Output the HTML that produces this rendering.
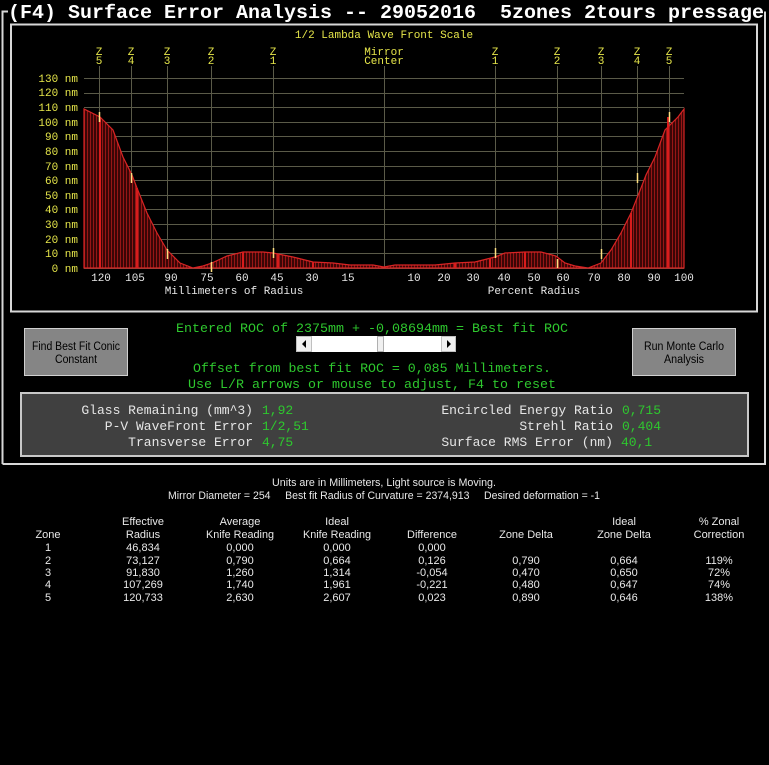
<!DOCTYPE html>
<html><head><meta charset="utf-8"><style>
html,body{margin:0;padding:0;background:#000;width:769px;height:765px;overflow:hidden}
svg{display:block}
.m{font-family:"Liberation Mono",monospace}
.s{font-family:"Liberation Sans",sans-serif}
</style></head><body>
<svg width="769" height="765" viewBox="0 0 769 765" xmlns="http://www.w3.org/2000/svg">
<defs>
<pattern id="hp" width="3" height="10" patternUnits="userSpaceOnUse" x="84">
<rect width="3" height="10" fill="#3a0606"/>
<rect width="1" height="10" fill="#961616"/>
</pattern>
</defs>
<rect width="769" height="765" fill="#000"/>
<path d="M2.5 464 V11.5 H8 M765 11.5 V464 H2.5" fill="none" stroke="#d8d8d8" stroke-width="2"/>
<text x="8" y="18" class="m" font-size="19" font-weight="bold" fill="#ffffff" textLength="756" lengthAdjust="spacingAndGlyphs" style="white-space:pre">(F4) Surface Error Analysis -- 29052016  5zones 2tours pressage</text>
<rect x="11" y="24.5" width="746" height="287" fill="#000" stroke="#d8d8d8" stroke-width="2"/>
<text x="384" y="38" class="m" font-size="11" fill="#e6e64a" text-anchor="middle">1/2 Lambda Wave Front Scale</text>
<g stroke="#5a5a48" stroke-width="1">
<line x1="84" x2="684" y1="78.5" y2="78.5"/><line x1="84" x2="684" y1="93.5" y2="93.5"/>
<line x1="84" x2="684" y1="107.5" y2="107.5"/><line x1="84" x2="684" y1="122.5" y2="122.5"/>
<line x1="84" x2="684" y1="136.5" y2="136.5"/><line x1="84" x2="684" y1="151.5" y2="151.5"/>
<line x1="84" x2="684" y1="166.5" y2="166.5"/><line x1="84" x2="684" y1="180.5" y2="180.5"/>
<line x1="84" x2="684" y1="195.5" y2="195.5"/><line x1="84" x2="684" y1="209.5" y2="209.5"/>
<line x1="84" x2="684" y1="224.5" y2="224.5"/><line x1="84" x2="684" y1="239.5" y2="239.5"/>
<line x1="84" x2="684" y1="253.5" y2="253.5"/><line x1="84" x2="684" y1="268.5" y2="268.5"/>
<line x1="99.5" x2="99.5" y1="66" y2="268"/><line x1="131.5" x2="131.5" y1="66" y2="268"/>
<line x1="167.5" x2="167.5" y1="66" y2="268"/><line x1="211.5" x2="211.5" y1="66" y2="268"/>
<line x1="273.5" x2="273.5" y1="66" y2="268"/><line x1="384.5" x2="384.5" y1="66" y2="268"/>
<line x1="495.5" x2="495.5" y1="66" y2="268"/><line x1="557.5" x2="557.5" y1="66" y2="268"/>
<line x1="601.5" x2="601.5" y1="66" y2="268"/><line x1="637.5" x2="637.5" y1="66" y2="268"/>
<line x1="669.5" x2="669.5" y1="66" y2="268"/>
</g>
<g class="m" font-size="11" fill="#e6e64a" text-anchor="middle">
<text x="99" y="55">Z</text><text x="99" y="64">5</text>
<text x="131" y="55">Z</text><text x="131" y="64">4</text>
<text x="167" y="55">Z</text><text x="167" y="64">3</text>
<text x="211" y="55">Z</text><text x="211" y="64">2</text>
<text x="273" y="55">Z</text><text x="273" y="64">1</text>
<text x="384" y="55">Mirror</text><text x="384" y="64">Center</text>
<text x="495" y="55">Z</text><text x="495" y="64">1</text>
<text x="557" y="55">Z</text><text x="557" y="64">2</text>
<text x="601" y="55">Z</text><text x="601" y="64">3</text>
<text x="637" y="55">Z</text><text x="637" y="64">4</text>
<text x="669" y="55">Z</text><text x="669" y="64">5</text>
</g>
<g class="m" font-size="11" fill="#e6e64a" text-anchor="end">
<text x="78" y="82">130 nm</text><text x="78" y="96">120 nm</text><text x="78" y="111">110 nm</text>
<text x="78" y="126">100 nm</text><text x="78" y="140">90 nm</text><text x="78" y="155">80 nm</text>
<text x="78" y="170">70 nm</text><text x="78" y="184">60 nm</text><text x="78" y="199">50 nm</text>
<text x="78" y="213">40 nm</text><text x="78" y="228">30 nm</text><text x="78" y="243">20 nm</text>
<text x="78" y="257">10 nm</text><text x="78" y="272">0 nm</text>
</g>
<path d="M84 268 L84 109 L100 117 L113 130 L123 157 L132 175 L137 188 L147 213 L157 233 L167 250 L180 263 L193 268 L203 266 L212 263 L227 256 L243 252 L263 252 L273 253 L293 257 L313 262 L333 263 L350 265 L373 265 L384 267 L395 265 L418 265 L435 265 L455 263 L475 262 L495 257 L505 253 L525 252 L541 252 L556 256 L565 263 L575 266 L588 268 L601 263 L611 250 L621 233 L631 213 L641 188 L646 175 L655 157 L665 130 L678 117 L684 109 L684 268 Z" fill="url(#hp)" stroke="#d82424" stroke-width="1.2"/>
<g stroke="#d81c1c" stroke-width="2">
<line x1="100" x2="100" y1="117" y2="268"/><line x1="137" x2="137" y1="188" y2="268"/>
<line x1="243" x2="243" y1="252" y2="268"/><line x1="278" x2="278" y1="254" y2="268"/>
<line x1="313" x2="313" y1="262" y2="268"/><line x1="668" x2="668" y1="117" y2="268"/>
<line x1="631" x2="631" y1="213" y2="268"/><line x1="525" x2="525" y1="252" y2="268"/>
<line x1="490" x2="490" y1="258" y2="268"/><line x1="455" x2="455" y1="263" y2="268"/>
</g>
<g stroke="#ffe080" stroke-width="1.5">
<line x1="99.5" x2="99.5" y1="112" y2="122"/><line x1="131.5" x2="131.5" y1="173" y2="183"/>
<line x1="167.5" x2="167.5" y1="249" y2="259"/><line x1="211.5" x2="211.5" y1="262" y2="272"/>
<line x1="273.5" x2="273.5" y1="248" y2="258"/>
<line x1="495.5" x2="495.5" y1="248" y2="258"/><line x1="557.5" x2="557.5" y1="259" y2="268"/>
<line x1="601.5" x2="601.5" y1="249" y2="259"/><line x1="637.5" x2="637.5" y1="173" y2="183"/>
<line x1="669.5" x2="669.5" y1="112" y2="122"/>
</g>
<g class="m" font-size="11" fill="#e8e8e8" text-anchor="middle">
<text x="101" y="281">120</text><text x="135" y="281">105</text><text x="171" y="281">90</text>
<text x="207" y="281">75</text><text x="242" y="281">60</text><text x="277" y="281">45</text>
<text x="312" y="281">30</text><text x="348" y="281">15</text>
<text x="414" y="281">10</text><text x="444" y="281">20</text><text x="473" y="281">30</text>
<text x="504" y="281">40</text><text x="534" y="281">50</text><text x="563" y="281">60</text>
<text x="594" y="281">70</text><text x="624" y="281">80</text><text x="654" y="281">90</text>
<text x="684" y="281">100</text>
<text x="234" y="294">Millimeters of Radius</text>
<text x="534" y="294">Percent Radius</text>
</g>
<rect x="24.5" y="328.5" width="103" height="47" fill="#858585" stroke="#d0d0d0"/>
<g class="s" font-size="11.5" fill="#000" text-anchor="middle">
<text x="76" y="350" textLength="88" lengthAdjust="spacingAndGlyphs">Find Best Fit Conic</text><text x="76" y="363" textLength="42" lengthAdjust="spacingAndGlyphs">Constant</text>
</g>
<rect x="632.5" y="328.5" width="103" height="47" fill="#858585" stroke="#d0d0d0"/>
<g class="s" font-size="11.5" fill="#000" text-anchor="middle">
<text x="684" y="350" textLength="80" lengthAdjust="spacingAndGlyphs">Run Monte Carlo</text><text x="684" y="363" textLength="40" lengthAdjust="spacingAndGlyphs">Analysis</text>
</g>
<g class="m" font-size="13" fill="#2ec82e" text-anchor="middle">
<text x="372" y="332" textLength="392" lengthAdjust="spacingAndGlyphs">Entered ROC of 2375mm + -0,08694mm = Best fit ROC</text>
<text x="372" y="372" textLength="358" lengthAdjust="spacingAndGlyphs">Offset from best fit ROC = 0,085 Millimeters.</text>
<text x="372" y="388" textLength="368" lengthAdjust="spacingAndGlyphs">Use L/R arrows or mouse to adjust, F4 to reset</text>
</g>
<rect x="296" y="336" width="160" height="16" fill="#fff"/>
<rect x="296.5" y="336.5" width="15" height="15" fill="#f0f0f0" stroke="#c0c0c0"/>
<path d="M302 344 L306 340 V348 Z" fill="#000"/>
<rect x="441.5" y="336.5" width="14" height="15" fill="#f0f0f0" stroke="#c0c0c0"/>
<path d="M451 344 L447 340 V348 Z" fill="#000"/>
<rect x="377.5" y="336.5" width="6" height="15" fill="#f0f0f0" stroke="#b0b0b0"/>
<rect x="21" y="393" width="727" height="63" fill="#404040" stroke="#c8c8c8" stroke-width="2"/>
<g class="m" font-size="13" fill="#e6e6e6" text-anchor="end">
<text x="253" y="414">Glass Remaining (mm^3)</text>
<text x="253" y="430">P-V WaveFront Error</text>
<text x="253" y="446">Transverse Error</text>
<text x="613" y="414">Encircled Energy Ratio</text>
<text x="613" y="430">Strehl Ratio</text>
<text x="613" y="446">Surface RMS Error (nm)</text>
</g>
<g class="m" font-size="13" fill="#2ec82e">
<text x="262" y="414">1,92</text><text x="262" y="430">1/2,51</text><text x="262" y="446">4,75</text>
<text x="622" y="414">0,715</text><text x="622" y="430">0,404</text><text x="621" y="446">40,1</text>
</g>
<g class="s" font-size="11" fill="#e8e8e8" text-anchor="middle">
<text x="384" y="486" textLength="224" lengthAdjust="spacingAndGlyphs">Units are in Millimeters, Light source is Moving.</text>
<text x="384" y="499" textLength="432" lengthAdjust="spacingAndGlyphs" style="white-space:pre">Mirror Diameter = 254     Best fit Radius of Curvature = 2374,913     Desired deformation = -1</text>
<text x="143" y="525">Effective</text><text x="240" y="525">Average</text><text x="337" y="525">Ideal</text>
<text x="624" y="525">Ideal</text><text x="719" y="525">% Zonal</text>
<text x="48" y="538">Zone</text><text x="143" y="538">Radius</text><text x="240" y="538" textLength="68" lengthAdjust="spacingAndGlyphs">Knife Reading</text>
<text x="337" y="538" textLength="68" lengthAdjust="spacingAndGlyphs">Knife Reading</text><text x="432" y="538">Difference</text><text x="526" y="538">Zone Delta</text>
<text x="624" y="538">Zone Delta</text><text x="719" y="538">Correction</text>
<text x="48" y="551">1</text><text x="143" y="551">46,834</text><text x="240" y="551">0,000</text><text x="337" y="551">0,000</text><text x="432" y="551">0,000</text>
<text x="48" y="564">2</text><text x="143" y="564">73,127</text><text x="240" y="564">0,790</text><text x="337" y="564">0,664</text><text x="432" y="564">0,126</text><text x="526" y="564">0,790</text><text x="624" y="564">0,664</text><text x="719" y="564">119%</text>
<text x="48" y="576">3</text><text x="143" y="576">91,830</text><text x="240" y="576">1,260</text><text x="337" y="576">1,314</text><text x="432" y="576">-0,054</text><text x="526" y="576">0,470</text><text x="624" y="576">0,650</text><text x="719" y="576">72%</text>
<text x="48" y="588">4</text><text x="143" y="588">107,269</text><text x="240" y="588">1,740</text><text x="337" y="588">1,961</text><text x="432" y="588">-0,221</text><text x="526" y="588">0,480</text><text x="624" y="588">0,647</text><text x="719" y="588">74%</text>
<text x="48" y="601">5</text><text x="143" y="601">120,733</text><text x="240" y="601">2,630</text><text x="337" y="601">2,607</text><text x="432" y="601">0,023</text><text x="526" y="601">0,890</text><text x="624" y="601">0,646</text><text x="719" y="601">138%</text>
</g>
</svg>
</body></html>
